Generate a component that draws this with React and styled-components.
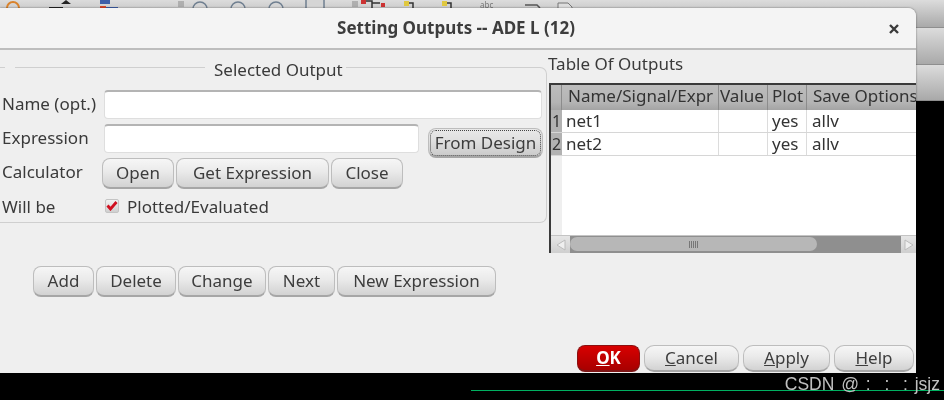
import styled, { createGlobalStyle } from "styled-components";

const GlobalStyle = createGlobalStyle`
  html, body {
    margin: 0;
    padding: 0;
    background: #000;
  }
  * {
    box-sizing: border-box;
  }
`;

const Desktop = styled.div`
  position: relative;
  width: 944px;
  height: 400px;
  overflow: hidden;
  background: #000;
  font-family: "Noto Sans", sans-serif;
  font-size: 17px;
  color: #3a3a3a;
  filter: blur(0.4px);
`;

const BackBar = styled.div`
  height: ${({ $h }) => $h}px;
  background: linear-gradient(#dcdcdc, #a9a9a9);
  border-bottom: 1px solid #8e8e8e;
`;

const ToolIcons = styled.svg`
  position: absolute;
  left: 0;
  top: 0;
`;

const GreenWire = styled.div`
  position: absolute;
  left: 471px;
  right: 0;
  top: 390px;
  height: 1px;
  background: #00b060;
`;

const Watermark = styled.div`
  position: absolute;
  right: 4px;
  top: 374px;
  font-family: "Liberation Sans", sans-serif;
  font-size: 17.5px;
  line-height: 20px;
  color: #c0c0c0;
  white-space: pre;
  word-spacing: 2px;
`;

const Window = styled.div`
  position: absolute;
  left: 0;
  top: 8px;
  width: 916px;
  height: 365px;
  display: flex;
  flex-direction: column;
  overflow: hidden;
  background: #efefef;
  border-radius: 0 8px 0 0;
  box-shadow: 0 0 2px rgba(0, 0, 0, 0.55);
`;

const TitleBar = styled.div`
  position: relative;
  flex: none;
  height: 42px;
  display: flex;
  align-items: center;
  justify-content: center;
  background: #f4f4f4;
  border-bottom: 2px solid #bdbdbd;
`;

const Title = styled.div`
  font-size: 17px;
  font-weight: 700;
  color: #3d3d3d;
  margin-top: -1px;
  margin-left: -4px;
`;

const CloseIcon = styled.svg`
  position: absolute;
  right: 16px;
  top: 15px;
`;

const Content = styled.div`
  flex: none;
  display: flex;
`;

const LeftColumn = styled.div`
  flex: none;
  width: 547px;
  padding-top: 17px;
`;

const GroupBox = styled.div`
  position: relative;
  height: 156px;
  padding-top: 22px;
  border: 1px solid #cfcfcf;
  border-left: none;
  border-radius: 0 7px 7px 0;
`;

const GroupGap = styled.span`
  position: absolute;
  left: 5px;
  top: -2px;
  width: 10px;
  height: 3px;
  background: #efefef;
`;

const GroupTitle = styled.span`
  position: absolute;
  left: 205px;
  top: -9px;
  padding: 0 3px 0 9px;
  line-height: 22px;
  background: #efefef;
`;

const Row = styled.div`
  display: grid;
  grid-template-columns: 102px 1fr;
  align-items: ${({ $align }) => $align || "center"};
  height: ${({ $h }) => $h}px;
`;

const Label = styled.div`
  padding-left: 2px;
  line-height: 22px;
  margin-top: ${({ $top }) => $top || 0}px;
`;

const TextField = styled.div`
  width: ${({ $w }) => ($w ? `${$w}px` : "auto")};
  height: 29px;
  margin-left: 2px;
  margin-right: 4px;
  flex: none;
  background: #fff;
  border: 1px solid #dedede;
  border-top: 2px solid #b4b4b4;
  border-radius: 4px;
`;

const ButtonRow = styled.div`
  display: flex;
  gap: 2px;
  align-items: flex-start;
  margin: ${({ $margin }) => $margin || 0};
`;

const Button = styled.div`
  flex: none;
  width: ${({ $w }) => $w}px;
  height: 31px;
  display: flex;
  align-items: center;
  justify-content: center;
  padding-bottom: 1px;
  white-space: nowrap;
  color: #3d3d3d;
  background: linear-gradient(#f6f6f6, #eaeaea 45%, #d2d2d2);
  border: 1px solid #bdbdbd;
  border-bottom: 2px solid #a6a6a6;
  border-radius: 8px;
`;

const FocusButton = styled(Button)`
  margin-left: 3px;
  margin-top: 4px;
  height: 30px;
  background: linear-gradient(#e9e9e9, #dfdfdf 45%, #cacaca);
  outline: 1px dotted #444;
  outline-offset: -3px;
`;

const OkButton = styled(Button)`
  height: 27px;
  color: #fff;
  font-weight: 700;
  background: linear-gradient(#d80000, #a80000);
  border: 1px solid #8c1010;
  border-bottom: 2px solid #7d1515;
`;

const FooterButton = styled(Button)`
  height: 27px;
  border-radius: 10px;
`;

const CheckRow = styled.div`
  display: flex;
  align-items: center;
  gap: 8px;
  padding-left: 3px;
  margin-top: -2px;
`;

const CheckBox = styled.span`
  flex: none;
  width: 14px;
  height: 14px;
  display: flex;
  align-items: center;
  justify-content: center;
  background: linear-gradient(#f2f2f2, #cfcfcf);
  border: 1px solid #c4c4c4;
  border-radius: 2px;
`;

const RightColumn = styled.div`
  flex: 1;
  min-width: 0;
  padding-left: 1px;
`;

const TableTitle = styled.div`
  height: 33px;
  padding-top: 3px;
  line-height: 22px;
`;

const Table = styled.div`
  width: 368px;
  height: 170px;
  margin-left: 1px;
  display: flex;
  flex-direction: column;
  overflow: hidden;
  background: #fff;
  border-top: 2px solid #3a3a3a;
  border-left: 2px solid #3a3a3a;
`;

const grid = "11px 157px 49px 39px 120px";

const HeaderRow = styled.div`
  flex: none;
  display: grid;
  grid-template-columns: ${grid};
  height: 25px;
  background: linear-gradient(#bdbdbd, #b4b4b4 70%, #a4a4a4);
`;

const HeaderCell = styled.div`
  padding-left: ${({ $pad }) => $pad}px;
  line-height: 22px;
  white-space: nowrap;
  color: #333;
  border-right: 1px solid #8c8c8c;
`;

const DataRow = styled.div`
  flex: none;
  display: grid;
  grid-template-columns: ${grid};
  height: 23px;
  border-bottom: 1px solid #d6d6d6;
`;

const RowHead = styled.div`
  background: #b2b2b2;
  line-height: 22px;
  text-align: center;
  font-size: 16px;
  color: #333;
`;

const Cell = styled.div`
  padding-left: ${({ $pad }) => $pad || 3}px;
  line-height: 22px;
  color: #333;
  border-right: 1px solid #dcdcdc;
`;

const Filler = styled.div`
  flex: 1;
  display: flex;
`;

const Gutter = styled.div`
  width: 11px;
  background: #efefef;
`;

const ScrollBar = styled.div`
  flex: none;
  height: 18px;
  display: flex;
  align-items: stretch;
  background: #8f8f8f;
  border-top: 1px solid #c4c4c4;
`;

const ScrollArrow = styled.div`
  flex: none;
  width: ${({ $w }) => $w}px;
  display: flex;
  align-items: center;
  justify-content: center;
  background: linear-gradient(#e6e6e6, #cfcfcf);
`;

const ScrollTrack = styled.div`
  flex: none;
  width: 331px;
  padding: 1px 0 2px;
`;

const ScrollThumb = styled.div`
  width: 247px;
  height: 100%;
  display: flex;
  align-items: center;
  justify-content: center;
  gap: 1px;
  background: #b7b7b7;
  border-radius: 8px;
`;

const GripLine = styled.span`
  width: 1px;
  height: 7px;
  background: #777;
`;

const Footer = styled.div`
  margin-top: auto;
  display: flex;
  justify-content: flex-end;
  gap: 4px;
  padding: 0 2px 1px 0;
`;

const columns = [
  { text: "", pad: 0 },
  { text: "Name/Signal/Expr", pad: 6 },
  { text: "Value", pad: 1 },
  { text: "Plot", pad: 4 },
  { text: "Save Options", pad: 6 },
];

const rows = [
  { id: 1, name: "net1" },
  { id: 2, name: "net2" },
];

function App() {
  return (
    <>
      <GlobalStyle />
      <Desktop>
        <BackBar $h={28} />
        <BackBar $h={37} />
        <BackBar $h={36} />
        <ToolIcons width="944" height="9" viewBox="0 0 944 9">
          <circle cx="13" cy="8" r="6" fill="none" stroke="#d9822b" strokeWidth="2" />
          <path d="M61 4l5-4 5 4z" fill="#222" />
          <rect x="49" y="7" width="14" height="2" fill="#222" />
          <rect x="100" y="0" width="10" height="4" fill="#3f5fa8" />
          <rect x="100" y="6" width="6" height="2" fill="#d9472b" />
          <rect x="106" y="7" width="12" height="2" fill="#3f5fa8" />
          <path d="M179 1v6M181 1v6M183 1v6" stroke="#888" />
          <circle cx="200" cy="9" r="7" fill="#d5d5d5" stroke="#6f7f90" strokeWidth="1.5" />
          <circle cx="238" cy="9" r="7" fill="#d5d5d5" stroke="#6f7f90" strokeWidth="1.5" />
          <circle cx="276" cy="9" r="7" fill="#d5d5d5" stroke="#6f7f90" strokeWidth="1.5" />
          <rect x="306" y="-3" width="18" height="14" fill="#d5d5d5" stroke="#6f7f90" strokeWidth="1.5" />
          <path d="M353 1v6M355 1v6M357 1v6" stroke="#888" />
          <path d="M364 1h8v8M372 3h8" fill="none" stroke="#333" strokeWidth="1.5" />
          <rect x="361" y="0" width="5" height="4" fill="#c33" />
          <rect x="381" y="3" width="4" height="4" fill="#c33" />
          <rect x="404" y="1" width="5" height="5" fill="#e0c840" />
          <path d="M409 3h4v6" fill="none" stroke="#333" strokeWidth="1.5" />
          <rect x="442" y="1" width="5" height="5" fill="#e0c840" />
          <path d="M447 3h4v6" fill="none" stroke="#333" strokeWidth="1.5" />
          <text x="480" y="8" fontSize="8" fontFamily="Noto Sans" fill="#777">abc</text>
          <path d="M525 5h12l3 3" fill="none" stroke="#555" strokeWidth="1.5" />
          <path d="M558 9V3h10l4 4v2" fill="#ddd" stroke="#777" />
        </ToolIcons>
        <GreenWire />
        <Watermark>CSDN @ :  :  : jsjz</Watermark>
        <Window>
          <TitleBar>
            <Title>Setting Outputs -- ADE L (12)</Title>
            <CloseIcon width="12" height="12" viewBox="0 0 12 12">
              <path d="M2 2l8 8M10 2l-8 8" stroke="#3a3a3a" strokeWidth="2.4" />
            </CloseIcon>
          </TitleBar>
          <Content>
            <LeftColumn>
              <GroupBox>
                <GroupGap />
                <GroupTitle>Selected Output</GroupTitle>
                <Row $h={34} $align="start">
                  <Label $top={3}>Name (opt.)</Label>
                  <TextField />
                </Row>
                <Row $h={34} $align="start">
                  <Label $top={3}>Expression</Label>
                  <ButtonRow>
                    <TextField $w={315} />
                    <FocusButton $w={115}>From Design</FocusButton>
                  </ButtonRow>
                </Row>
                <Row $h={31}>
                  <Label $top={-3}>Calculator</Label>
                  <ButtonRow>
                    <Button $w={72}>Open</Button>
                    <Button $w={153}>Get Expression</Button>
                    <Button $w={72}>Close</Button>
                  </ButtonRow>
                </Row>
                <Row $h={36}>
                  <Label>Will be</Label>
                  <CheckRow>
                    <CheckBox>
                      <svg width="12" height="10" viewBox="0 0 12 10">
                        <path d="M1.5 4.5l3 3.5 6-7" fill="none" stroke="#d01020" strokeWidth="2.8" />
                      </svg>
                    </CheckBox>
                    Plotted/Evaluated
                  </CheckRow>
                </Row>
              </GroupBox>
              <ButtonRow $margin="43px 0 0 33px">
                <Button $w={61}>Add</Button>
                <Button $w={80}>Delete</Button>
                <Button $w={88}>Change</Button>
                <Button $w={67}>Next</Button>
                <Button $w={159}>New Expression</Button>
              </ButtonRow>
            </LeftColumn>
            <RightColumn>
              <TableTitle>Table Of Outputs</TableTitle>
              <Table>
                <HeaderRow>
                  {columns.map((c) => (
                    <HeaderCell key={c.text} $pad={c.pad}>{c.text}</HeaderCell>
                  ))}
                </HeaderRow>
                {rows.map((r) => (
                  <DataRow key={r.id}>
                    <RowHead>{r.id}</RowHead>
                    <Cell $pad={4}>{r.name}</Cell>
                    <Cell />
                    <Cell $pad={4}>yes</Cell>
                    <Cell $pad={5}>allv</Cell>
                  </DataRow>
                ))}
                <Filler>
                  <Gutter />
                </Filler>
                <ScrollBar>
                  <ScrollArrow $w={19}>
                    <svg width="10" height="12" viewBox="0 0 10 12">
                      <path d="M9 1L1 6l8 5z" fill="#efefef" stroke="#bbb" />
                    </svg>
                  </ScrollArrow>
                  <ScrollTrack>
                    <ScrollThumb>
                      {[0, 1, 2, 3, 4].map((i) => (
                        <GripLine key={i} />
                      ))}
                    </ScrollThumb>
                  </ScrollTrack>
                  <ScrollArrow $w={16}>
                    <svg width="10" height="12" viewBox="0 0 10 12">
                      <path d="M1 1l8 5-8 5z" fill="#efefef" stroke="#bbb" />
                    </svg>
                  </ScrollArrow>
                </ScrollBar>
              </Table>
            </RightColumn>
          </Content>
          <Footer>
            <OkButton $w={63}><span><u>O</u>K</span></OkButton>
            <FooterButton $w={95}><span><u>C</u>ancel</span></FooterButton>
            <FooterButton $w={87}><span><u>A</u>pply</span></FooterButton>
            <FooterButton $w={80}><span><u>H</u>elp</span></FooterButton>
          </Footer>
        </Window>
      </Desktop>
    </>
  );
}

export default App;
